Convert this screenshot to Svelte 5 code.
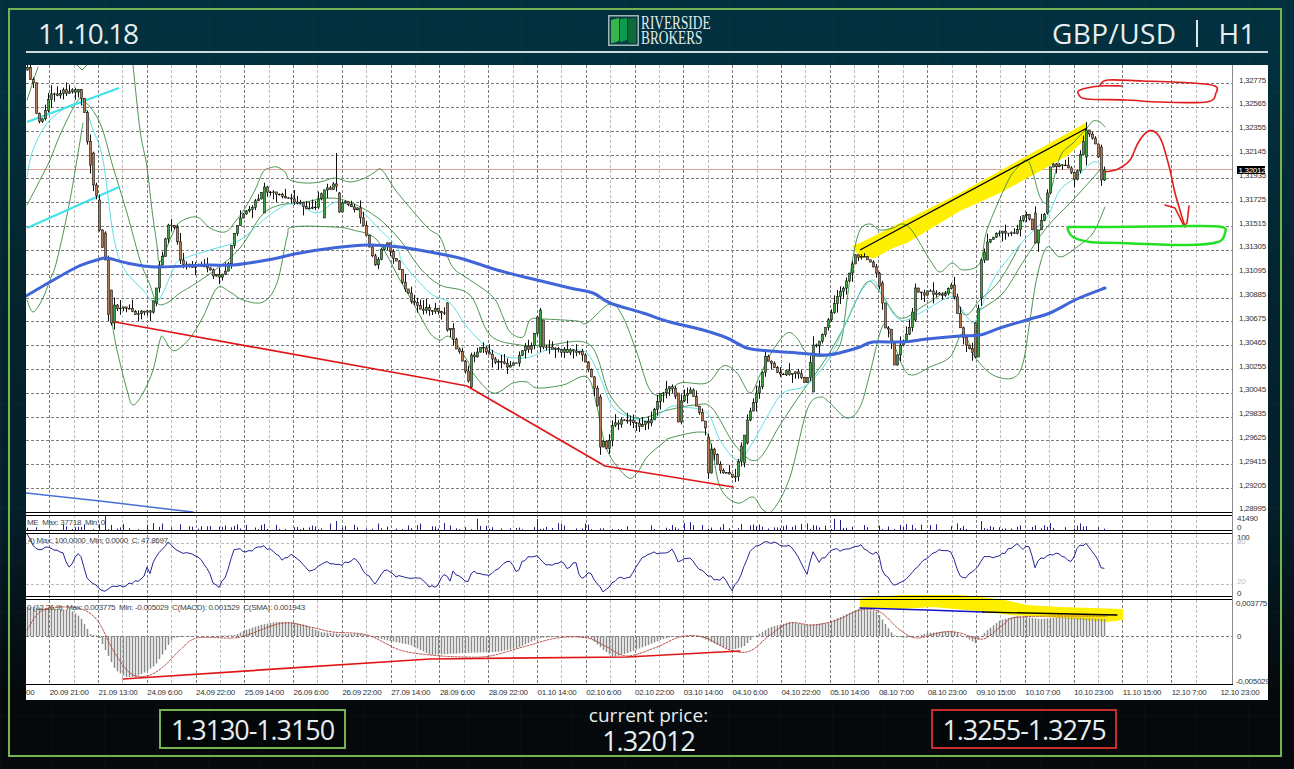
<script>
	// all chart traces are in page coordinates, the svg viewBox lines up with them
	const priceTrace = '27,70 33,85 35,110 40,125 45,110 50,95 60,92 70,90 78,90 82,100 85,120 88,150 92,180 97,200 100,225 103,260 105,300 107,320 112,305 120,307 135,312 150,310 155,295 160,265 168,225 175,230 180,262 190,265 205,268 220,280 228,265 232,240 240,218 250,210 260,195 265,190 275,195 285,198 295,200 305,208 315,205 325,190 335,185 340,200 350,205 358,210 365,235 375,265 385,240 395,260 405,290 415,305 425,310 440,310 448,320 455,345 462,360 470,385 475,350 485,350 495,360 505,365 515,365 525,345 530,350 538,315 545,345 555,350 565,350 575,350 585,360 592,380 600,420 605,455 612,425 625,420 640,425 650,420 660,395 668,385 680,400 690,390 700,415 710,445 720,470 735,478 742,440 750,410 760,385 765,355 780,375 795,370 805,385 815,345 825,330 835,300 845,285 855,255 865,258 875,270 882,300 888,330 895,360 900,345 910,325 915,295 930,292 945,295 952,282 958,320 965,345 972,350 978,310 985,240 1000,232 1015,232 1025,210 1035,235 1045,210 1052,165 1065,165 1075,180 1085,130 1095,142 1100,165 1105,178';

	const upperBand = '133,65 140,130 147,167 152,210 157,245 160,262 172,235 180,222 197,217 210,228 225,232 235,222 245,208 255,190 263,172 270,168 277,167 285,172 290,180 305,183 320,182 335,178 350,182 365,178 375,172 382,170 397,192 427,227 440,237 448,258 455,270 467,278 493,297 503,317 510,332 523,337 530,320 543,319 577,321 587,323 610,304 623,317 637,353 650,390 665,395 680,383 707,383 723,366 737,373 750,393 760,375 773,350 787,333 797,338 807,353 825,356 840,345 847,300 853,257 860,230 870,224 880,230 893,228 903,224 913,232 930,260 940,272 952,263 963,270 980,263 987,230 1007,183 1017,168 1027,160 1033,173 1040,197 1048,200 1060,157 1073,143 1087,128 1093,121 1100,122 1105,127';
	const lowerBand = '112,323 117,350 127,390 133,405 143,393 153,370 160,340 163,337 170,348 177,350 190,338 203,317 217,288 230,292 243,300 263,302 277,283 287,237 293,227 333,227 353,230 377,240 400,280 417,310 430,333 440,340 450,337 467,360 473,373 493,393 513,383 527,382 537,388 563,385 587,377 597,407 607,450 627,477 637,473 647,457 663,443 670,438 700,432 710,440 720,487 737,503 753,497 763,510 773,510 790,477 807,410 820,397 830,403 847,418 860,407 870,373 880,333 887,327 903,367 913,375 930,367 950,357 963,333 975,357 993,375 1013,378 1023,363 1030,320 1037,277 1047,247 1060,257 1077,247 1093,233 1105,207';
	const innerUpper = '27,205 40,180 50,160 60,135 75,105 83,100 100,123 113,167 127,213 140,260 150,285 157,303 167,303 180,293 190,287 215,270 240,248 262,215 280,205 300,203 330,198 352,203 378,218 400,240 420,268 440,285 470,295 490,335 520,345 548,345 590,345 610,395 635,418 668,410 695,405 712,408 735,445 757,460 780,425 800,395 825,360 845,325 866,283 880,292 900,318 925,305 950,292 965,315 980,300 1000,280 1020,245';
	const innerLower = '83,123 70,200 57,260 50,280 42,300 33,312 27,300';
	const midLine = '27,177 33,150 50,120 80,103 93,130 103,160 113,233 123,267 143,290 157,302 173,270 180,260 210,250 240,240 267,217 293,203 317,213 337,202 363,213 377,227 397,247 403,263 430,293 450,303 467,327 487,347 507,357 530,357 547,350 570,350 587,353 600,377 613,407 633,418 650,420 670,407 683,407 707,413 720,440 737,460 750,447 767,417 783,393 807,385 830,357 847,320 860,293 873,280 883,297 900,320 920,313 950,297 960,307 973,323 980,310 993,280 1007,260 1027,237 1047,217 1060,190 1077,177 1093,162 1103,167';
	const innerBottom = '980,310 1003,293 1023,262 1047,227 1073,200 1100,170';

	const ma200 = '26,296 50,282 77,267 97,260 107,258 127,263 157,267 207,265 233,265 267,260 300,253 333,248 367,245 400,247 430,252 463,259 497,270 537,280 570,288 593,293 610,303 643,313 670,322 703,330 727,338 747,348 770,351 797,353 827,355 843,352 860,347 873,342 903,342 927,339 960,336 980,335 1000,328 1030,319 1050,313 1077,299 1105,288';

	const rsi = '27,535 37,550 50,547 63,553 68,568 80,552 87,577 103,592 113,585 123,586 143,578 148,563 150,573 155,557 168,543 180,552 197,555 210,573 212,582 218,588 227,575 232,553 235,547 247,552 263,545 283,560 292,553 310,573 323,562 342,565 355,558 363,570 375,583 385,569 397,577 417,577 430,587 437,587 443,573 450,580 452,572 463,577 467,583 472,572 490,575 503,565 510,560 517,573 523,560 537,555 547,565 563,562 567,568 577,562 580,579 590,572 603,592 617,578 630,577 643,557 650,552 663,553 673,549 678,563 690,557 697,567 710,577 717,580 723,578 732,589 740,578 750,552 763,542 777,543 793,548 807,573 813,552 818,562 833,550 845,550 860,545 872,555 878,552 882,570 893,584 903,582 915,568 937,550 952,552 958,573 965,578 977,568 983,558 997,558 1017,543 1023,548 1028,543 1035,567 1040,559 1057,553 1072,562 1077,548 1087,543 1098,560 1102,569 1105,566';

	const macdHist = '27,607 50,608 70,610 80,617 90,634 98,636 100,640 105,650 115,670 125,677 135,677 145,672 155,665 165,650 172,638 180,637 195,636 215,636 235,635 245,630 260,625 275,622 290,622 305,625 320,632 340,634 360,634 370,636 385,640 410,645 430,655 463,653 497,652 517,648 530,642 540,638 563,636 590,638 603,650 613,657 627,653 643,647 660,640 670,637 697,636 713,643 730,650 743,647 753,637 760,633 770,627 790,622 807,625 827,623 840,617 860,608 877,612 887,627 893,635 903,638 917,636 927,633 953,631 963,636 975,643 980,637 987,630 1000,620 1017,616 1040,619 1060,617 1105,619';
	const macdSignal = '27,630 43,610 77,608 97,620 113,650 130,673 147,676 163,667 180,650 197,638 233,638 250,634 283,623 310,627 333,632 367,635 400,650 430,655 463,657 490,656 523,647 557,638 587,638 607,647 627,656 657,647 680,637 703,637 730,650 750,651 770,635 790,623 813,625 837,620 860,610 880,612 900,630 917,638 943,632 960,633 983,639 1003,625 1020,617 1107,616';

	// hand drawn markup
	const yellowWedge = '852,246 862,242 960,193 1075,129 1087,122 1087,138 1067,156 1033,175 1000,193 960,211 907,243 893,248 875,258 860,258';
	const yellowMacd = '860,598 903,595 960,595 1000,599 1027,605 1060,607 1123,609 1123,620 1107,622 1047,617 1010,615 987,612 933,607 900,609 860,608';
	const redEllipse = '1122,86 1100,86 1080,90 1079,95 1087,99 1127,100 1160,102 1207,102 1216,93 1215,86 1193,83 1143,81 1108,80 1100,85';
	const redForecast = '1105,172 1118,169 1130,160 1138,143 1147,132 1155,132 1162,142 1170,170 1175,193 1185,227';
	const redArrow = '1165,205 1175,208 1184,226 1187,223 1189,206';
	const greenEllipse = '1068,227 1113,227 1193,226 1222,227 1225,233 1218,242 1187,245 1120,243 1090,242 1073,237 1068,230 1068,227';

	const hLines = [83, 107, 131, 155, 178, 202, 226, 250, 274, 298, 321, 345, 369, 393, 417, 440, 464, 488];
	const vLines = Array.from({ length: 48 }, (_, i) => 49.7 + i * 24.39);

	const priceLabels = [
		['1,32775', 80], ['1,32565', 103], ['1,32355', 127], ['1,32145', 151], ['1,31935', 175], ['1,31725', 199],
		['1,31515', 223], ['1,31305', 246], ['1,31095', 270], ['1,30885', 294], ['1,30675', 318], ['1,30465', 342],
		['1,30255', 366], ['1,30045', 389], ['1,29835', 413], ['1,29625', 437], ['1,29415', 461], ['1,29205', 485],
		['1,28995', 508]
	];

	const timeLabels = [
		'20.09 21:00', '21.09 13:00', '24.09 6:00', '24.09 22:00', '25.09 14:00', '26.09 6:00', '26.09 22:00',
		'27.09 14:00', '28.09 6:00', '28.09 22:00', '01.10 14:00', '02.10 6:00', '02.10 22:00', '03.10 14:00',
		'04.10 6:00', '04.10 22:00', '05.10 14:00', '08.10 7:00', '08.10 23:00', '09.10 15:00', '10.10 7:00',
		'10.10 23:00', '11.10 15:00', '12.10 7:00', '12.10 23:00'
	];

	function parse(trace) {
		return trace.split(' ').map((p) => p.split(',').map(Number));
	}

	function valueAt(points, x) {
		if (x <= points[0][0]) return points[0][1];
		for (let i = 1; i < points.length; i++) {
			if (x <= points[i][0]) {
				const [x0, y0] = points[i - 1];
				const [x1, y1] = points[i];
				return y0 + ((y1 - y0) * (x - x0)) / (x1 - x0);
			}
		}
		return points[points.length - 1][1];
	}

	// catmull-rom through the traced points
	function smooth(trace) {
		const p = parse(trace);
		let d = `M${p[0][0]} ${p[0][1]}`;
		for (let i = 0; i < p.length - 1; i++) {
			const a = p[i - 1] ?? p[i];
			const b = p[i];
			const c = p[i + 1];
			const e = p[i + 2] ?? c;
			const c1x = b[0] + (c[0] - a[0]) / 6;
			const c1y = b[1] + (c[1] - a[1]) / 6;
			const c2x = c[0] - (e[0] - b[0]) / 6;
			const c2y = c[1] - (e[1] - b[1]) / 6;
			d += `C${c1x.toFixed(1)} ${c1y.toFixed(1)} ${c2x.toFixed(1)} ${c2y.toFixed(1)} ${c[0]} ${c[1]}`;
		}
		return d;
	}

	// fixed noise, the picture has to be the same on every load
	function noise(i) {
		const v = Math.sin(i * 12.9898) * 43758.5453;
		return v - Math.floor(v);
	}

	const BAR_STEP = 3;
	const BAR_COUNT = 360;
	const barX = Array.from({ length: BAR_COUNT }, (_, i) => 27 + i * BAR_STEP);

	const pricePoints = parse(priceTrace);
	const tallWicks = { 335: 153, 540: 308, 765: 350, 1085: 122, 120: 300 };

	// the long bars that stand out in the picture: [x, top, bottom, bull]
	const bigBars = [
		[92, 153, 185, 0], [100, 200, 230, 0], [105, 233, 260, 0], [106, 260, 320, 0], [112, 290, 323, 0],
		[157, 288, 303, 1], [160, 265, 288, 1], [263, 187, 213, 1], [325, 190, 218, 1], [340, 193, 212, 0],
		[448, 303, 330, 0], [470, 355, 387, 1], [540, 310, 347, 1], [543, 320, 347, 0], [600, 397, 447, 0],
		[678, 393, 422, 0], [708, 437, 473, 0], [743, 435, 463, 1], [748, 420, 443, 1], [812, 345, 392, 1],
		[882, 283, 303, 0], [885, 303, 328, 0], [895, 343, 365, 0], [915, 288, 320, 1], [975, 323, 357, 0],
		[982, 260, 298, 1], [987, 242, 260, 1], [1035, 213, 243, 0], [1048, 193, 213, 1], [1051, 167, 193, 1],
		[1087, 130, 157, 1], [1101, 147, 180, 0], [1105, 170, 180, 1]
	];

	const candles = [];
	let lastClose = valueAt(pricePoints, 27);
	barX.forEach((x, i) => {
		const big = bigBars.find((b) => Math.abs(b[0] - x) < 1.6);
		let close = valueAt(pricePoints, x) + (noise(i) - 0.5) * 5;
		let open = lastClose;
		if (big) {
			open = big[3] ? big[2] : big[1];
			close = big[3] ? big[1] : big[2];
		}
		let high = Math.min(open, close) - Math.pow(noise(i + 500), 2) * 9;
		const low = Math.max(open, close) + Math.pow(noise(i + 900), 2) * 9;
		const spike = Object.keys(tallWicks).find((k) => Math.abs(k - x) < 2);
		if (spike) high = tallWicks[spike];
		candles.push({ x, open, close, high, low, bull: close < open });
		lastClose = close;
	});

	const volumeSpikes = { 104: 516, 337: 521, 476: 519, 537: 519, 690: 522, 835: 519, 840: 520, 980: 521, 1050: 523 };
	const volumes = barX
		.map((x, i) => {
			const spike = Object.keys(volumeSpikes).find((k) => Math.abs(k - x) < 2);
			if (spike) return { x, top: volumeSpikes[spike] };
			return { x, top: 530 - Math.pow(noise(i + 77), 3) * 7 };
		})
		.filter((v) => v.top < 529.2);

	const rsiPoints = parse(rsi);
	const rsiLine = barX
		.filter((x) => x <= 1105)
		.map((x, i) => `${x},${(valueAt(rsiPoints, x) + (noise(i + 300) - 0.5) * 3).toFixed(1)}`)
		.join(' ');

	const histPoints = parse(macdHist);
	const histBars = barX.map((x) => ({ x, top: valueAt(histPoints, x) }));
</script>

<div class="page">
	<div class="frame">
		<header class="top">
			<span class="date">11.10.18</span>
			<div class="logo">
				<svg class="logo-mark" viewBox="0 0 31 31" width="31" height="31" aria-hidden="true">
					<rect x="0.75" y="0.75" width="29.5" height="29.5" fill="#0b3d45" stroke="#9db8b4" stroke-width="1.5" />
					<polygon points="3,5 11,3 11,26 5,28 3,28" fill="#38b54a" />
					<polygon points="12,4 19,3 19,25 13,27 12,27" fill="#0d9a4b" />
					<polygon points="20,4 28,3 28,28 21,28 20,25" fill="#0c6b38" />
				</svg>
				<div class="logo-name">
					<span>RIVERSIDE</span>
					<span>BROKERS</span>
				</div>
			</div>
			<span class="pair">GBP/USD<i class="sep"></i>H1</span>
		</header>

		<svg class="chart" viewBox="26 65 1242 635" width="1242" height="635" role="img" aria-label="GBP/USD H1 chart">
			<defs>
				<clipPath id="main-pane"><rect x="26" y="65" width="1207" height="447" /></clipPath>
			</defs>
			<rect x="26" y="65" width="1242" height="635" fill="#fff" />

			{#each vLines as x, i}
				<line x1={x} x2={x} y1="65" y2="684" class={i % 2 ? 'grid-light' : 'grid'} />
			{/each}
			{#each hLines as y}
				<line x1="26" x2="1232" y1={y + 0.5} y2={y + 0.5} class="grid" />
			{/each}
			<line x1="26" x2="1232" y1="543.5" y2="543.5" class="grid-light" />
			<line x1="26" x2="1232" y1="584.5" y2="584.5" class="grid-light" />
			<line x1="26" x2="1232" y1="636.5" y2="636.5" class="grid" />

			<line x1="26" x2="1232" y1="169.5" y2="169.5" class="price-line" />

			<g clip-path="url(#main-pane)">
				<polygon points={yellowWedge} class="marker" />

				<path d="M27 100L38 67" class="band" />
				<path d="M77 65L82 70L87 65" class="band" />
				<path d={smooth(upperBand)} class="band" />
				<path d={smooth(lowerBand)} class="band" />
				<path d={smooth(innerUpper)} class="band" />
				<path d={smooth(innerLower)} class="band" />
				<path d={smooth(innerBottom)} class="band" />
				<path d={smooth(midLine)} class="mid" />

				<line x1="27" y1="122" x2="119" y2="88" class="cyan" />
				<line x1="27" y1="228" x2="119" y2="187" class="cyan" />

				{#each candles as c}
					<line x1={c.x + 0.5} x2={c.x + 0.5} y1={c.high} y2={c.low} class="wick" />
					<rect
						x={c.x - 0.5}
						y={Math.min(c.open, c.close)}
						width="2"
						height={Math.max(Math.abs(c.close - c.open), 0.6)}
						class={c.bull ? 'bull' : 'bear'}
					/>
				{/each}

				<path d={smooth(ma200)} class="ma" />
				<polyline points="26,493 100,501 167,509 193,512" class="ma-old" />
				<polyline points="115,322 430,379 467,386 605,466 733,487" class="red-line" />
				<line x1="860" y1="250" x2="1087" y2="128" class="black-line" />

				<path d={smooth(redEllipse)} class="pen-red" />
				<path d={smooth(redForecast)} class="pen-red" />
				<polyline points={redArrow} class="pen-red" />
				<path d={smooth(greenEllipse)} class="pen-green" />
			</g>

			<!-- volume -->
			{#each volumes as v}
				<line x1={v.x + 0.5} x2={v.x + 0.5} y1={v.top} y2="530" class="vol" />
			{/each}
			<text x="27" y="524.5" class="pane-label">ME&nbsp;&nbsp;Max: 37718&nbsp;&nbsp;Min: 0</text>

			<!-- rsi -->
			<polyline points={rsiLine} class="rsi" />
			<text x="28" y="542.5" class="pane-label">4) Max: 100.0000&nbsp;&nbsp;Min: 0.0000&nbsp;&nbsp;C: 47.8697</text>

			<!-- macd -->
			<polygon points={yellowMacd} class="marker" />
			{#each histBars as b}
				<line x1={b.x + 0.5} x2={b.x + 0.5} y1={b.top} y2="636" class="hist" />
			{/each}
			<path d={smooth(macdSignal)} class="signal" />
			<polyline points="123,679 430,659 627,657 740,651" class="red-line" />
			<polyline points="860,608 927,610 983,612" class="blue-thin" />
			<polyline points="983,612 1117,615" class="black-line" />
			<text x="27" y="609.5" class="pane-label">
				0 (12,26,9)&nbsp;&nbsp;Max: 0.003775&nbsp;&nbsp;Min: -0.005029&nbsp;&nbsp;C(MACD): 0.001529&nbsp;&nbsp;C(SMA): 0.001943
			</text>

			<!-- pane separators -->
			{#each [512.5, 515.5, 530.5, 533.5, 596.5, 599.5, 684.5] as y}
				<line x1="26" x2="1233" y1={y} y2={y} class="sep-line" />
			{/each}
			<line x1="1232.5" x2="1232.5" y1="65" y2="684" class="axis-line" />

			<!-- axes -->
			{#each priceLabels as [label, y]}
				<text x="1239" y={y + 3} class="axis-text">{label}</text>
			{/each}
			<rect x="1237" y="166" width="28" height="8" fill="#000" />
			<text x="1238.5" y="173" class="axis-text tag">1,32012</text>

			<text x="1237" y="521" class="axis-text">41490</text>
			<text x="1237" y="530" class="axis-text">0</text>
			<text x="1237" y="540" class="axis-text">100</text>
			<text x="1237" y="544" class="axis-text faint">80</text>
			<text x="1237" y="584" class="axis-text faint">20</text>
			<text x="1237" y="596" class="axis-text">0</text>
			<text x="1236" y="606" class="axis-text">0,003775</text>
			<text x="1237" y="639" class="axis-text">0</text>
			<text x="1236" y="684" class="axis-text">-0,005029</text>

			<text x="26" y="695" class="axis-text">00</text>
			{#each timeLabels as label, i}
				<text x={49.7 + i * 48.78} y="695" class="axis-text">{label}</text>
			{/each}
		</svg>

		<footer class="levels">
			<div class="level support">1.3130-1.3150</div>
			<div class="current">
				<span class="current-title">current price:</span>
				<span class="current-value">1.32012</span>
			</div>
			<div class="level resistance">1.3255-1.3275</div>
		</footer>
	</div>
</div>

<style>
	:global(body) {
		margin: 0;
	}

	.page {
		box-sizing: border-box;
		height: 769px;
		padding: 8px 12px 12px 8px;
		font-family: 'Open Sans', 'Noto Sans', sans-serif;
		color: #e6eef0;
		background-color: #04222c;
		background-image:
			repeating-linear-gradient(90deg, rgba(255, 255, 255, 0.012) 0 2px, transparent 2px 52px),
			repeating-linear-gradient(0deg, rgba(255, 255, 255, 0.012) 0 2px, transparent 2px 52px),
			linear-gradient(180deg, #03303e 0%, #03303e 9%, #04232d 40%, #04202a 66%, #05090c 90%, #05090c 100%);
	}

	.frame {
		box-sizing: border-box;
		height: 749px;
		padding: 0 12px 0 16px;
		border: 2px solid #72b451;
	}

	.top {
		box-sizing: border-box;
		display: grid;
		grid-template-columns: 1fr auto 1fr;
		align-items: center;
		height: 43px;
		padding: 0 12px;
		border-bottom: 2px solid #c8dadb;
		font-size: 28px;
		line-height: 1;
	}

	.date {
		letter-spacing: -1.4px;
		padding-top: 5px;
	}

	.logo {
		display: flex;
		align-items: center;
		gap: 2px;
		margin-left: 25px;
	}

	.logo-mark {
		display: block;
	}

	.logo-name {
		width: 70px;
		font-family: 'Liberation Serif', serif;
		font-size: 18px;
		line-height: 15px;
		color: #e2ecea;
	}

	.logo-name span {
		display: block;
		white-space: nowrap;
		transform: scaleX(0.74);
		transform-origin: left center;
	}

	.pair {
		justify-self: end;
		display: flex;
		align-items: center;
		padding-top: 5px;
		letter-spacing: 0.4px;
	}

	.sep {
		width: 2px;
		height: 27px;
		margin: 0 21px 0 19px;
		background: #dde8ea;
	}

	.chart {
		display: block;
		margin-top: 12px;
	}

	.grid,
	.grid-light {
		stroke-width: 1;
		stroke-dasharray: 3 2;
		shape-rendering: crispEdges;
	}

	.grid {
		stroke: #7c7c7c;
	}

	.grid-light {
		stroke: #bcbcbc;
	}

	.price-line {
		stroke: #e3a298;
		stroke-width: 1;
	}

	polyline,
	path {
		fill: none;
		stroke-linejoin: round;
		stroke-linecap: round;
	}

	.band {
		stroke: #3a8a40;
		stroke-width: 0.9;
	}

	.mid {
		stroke: #5fe0e6;
		stroke-width: 1;
	}

	.cyan {
		stroke: #3fe3ea;
		stroke-width: 2;
	}

	.wick {
		stroke: #111;
		stroke-width: 1;
	}

	.bull,
	.bear {
		stroke: #111;
		stroke-width: 0.6;
	}

	.bull {
		fill: #3fa33f;
	}

	.bear {
		fill: #b57a50;
	}

	.ma {
		stroke: #3f65d8;
		stroke-width: 3;
	}

	.ma-old {
		stroke: #4a70d4;
		stroke-width: 1.6;
	}

	.red-line {
		stroke: #e01616;
		stroke-width: 1.7;
	}

	.black-line {
		stroke: #000;
		stroke-width: 1.3;
	}

	.blue-thin {
		stroke: #1414c8;
		stroke-width: 1.6;
	}

	.marker {
		fill: #fff000;
	}

	.pen-red {
		stroke: #e01c1c;
		stroke-width: 1.6;
	}

	.pen-green {
		stroke: #24e024;
		stroke-width: 2.5;
	}

	.vol {
		stroke: #20208c;
		stroke-width: 1;
	}

	.rsi {
		stroke: #26269a;
		stroke-width: 1;
	}

	.hist {
		stroke: #8a8a8a;
		stroke-width: 1.5;
	}

	.signal {
		stroke: #b03a30;
		stroke-width: 0.9;
		stroke-dasharray: 2 1.5;
	}

	.sep-line {
		stroke: #000;
		stroke-width: 1;
	}

	.axis-line {
		stroke: #8a8a8a;
		stroke-width: 1;
	}

	.axis-text,
	.pane-label {
		font-family: 'Liberation Sans', Arial, sans-serif;
		font-size: 8px;
		letter-spacing: -0.3px;
		fill: #333;
	}

	.pane-label {
		fill: #444;
	}

	.tag {
		fill: #fff;
	}

	.faint {
		fill: #bbb;
	}

	.levels {
		display: grid;
		grid-template-columns: 187px 1fr 186px;
		margin: 9px 151px 0 133px;
	}

	.level {
		box-sizing: border-box;
		height: 40px;
		display: flex;
		align-items: center;
		justify-content: center;
		font-size: 27px;
		letter-spacing: -1.1px;
		background: rgba(0, 0, 0, 0.2);
	}

	.support {
		border: 2px solid #72b451;
	}

	.resistance {
		border: 2px solid #c92a2a;
	}

	.current {
		display: flex;
		flex-direction: column;
		align-items: center;
		padding-left: 20px;
		margin-top: -6px;
	}

	.current-title {
		font-size: 19px;
		line-height: 24px;
	}

	.current-value {
		font-size: 27px;
		line-height: 28px;
		letter-spacing: -1px;
	}
</style>
